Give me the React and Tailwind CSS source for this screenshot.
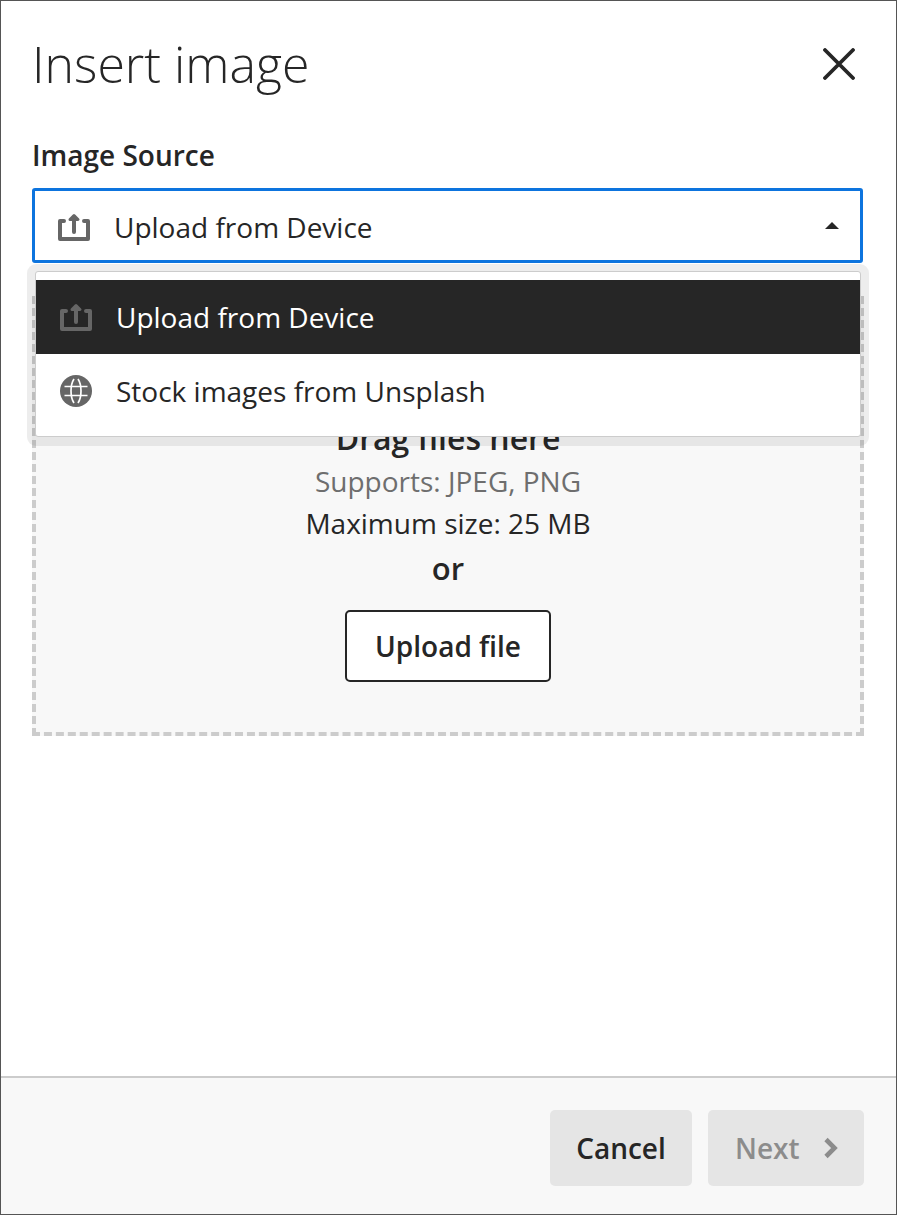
const UploadIcon = ({ className }) => (
  <svg viewBox="0 0 32 28" className={className} fill="none" stroke="currentColor" strokeWidth="4" strokeLinecap="round" strokeLinejoin="round" aria-hidden="true">
    <path d="M6 8H2v18h28V8h-4" />
    <path d="M16 19V4" />
    <path d="M12 6.500L16 2.500l4 4z" fill="currentColor" strokeWidth="3" />
  </svg>
)

const GlobeIcon = ({ className }) => (
  <svg viewBox="0 0 32 32" className={className} aria-hidden="true">
    <circle cx="16" cy="16" r="16" fill="currentColor" />
    <g fill="none" stroke="#fff" strokeWidth="1.7">
      <path d="M4.500 11.500h23M4.500 20.500h23" />
      <path d="M14 4C10 10 10 22 14 28M18 4c4 6 4 18 0 24" />
    </g>
  </svg>
)

const options = [
  { label: 'Upload from Device', Icon: UploadIcon, active: true },
  { label: 'Stock images from Unsplash', Icon: GlobeIcon, active: false },
]

export default function App() {
  return (
    <div className="flex h-[1215px] w-[897px] flex-col border border-[#555] bg-white font-['Open_Sans',sans-serif] text-[#262626]">
      <div className="relative flex-1 pr-[32px] pl-[31px]">
        <div className="flex items-start justify-between pt-[31px]">
          <h1 className="text-[50px] leading-[65px] font-light">Insert image</h1>
          <button className="mt-[16px] mr-[9px] text-[#262626]" aria-label="Close">
            <svg viewBox="0 0 32 32" className="h-8 w-8" fill="none" stroke="currentColor" strokeWidth="3.8" strokeLinecap="round">
              <path d="M2 2l28 28M30 2L2 30" />
            </svg>
          </button>
        </div>

        <label className="mt-[40px] block text-[28px] leading-[36px] font-semibold">Image Source</label>

        <div className="mt-[15px] mr-px flex h-[75px] items-center rounded-[3px] border-[3px] border-[#0d74de] pt-[2px] pr-[21px] pl-[23px]">
          <UploadIcon className="h-[28px] w-[32px] text-[#666]" />
          <span className="ml-[24px] flex-1 text-[28px] leading-none">Upload from Device</span>
          <span className="mb-[2px] h-0 w-0 border-x-[7px] border-b-[7px] border-x-transparent border-b-[#262626]" />
        </div>

        <div className="mt-[33px] flex h-[440px] flex-col items-center border-4 border-dashed border-[#ccc] bg-[#f8f8f8] pt-[118px]">
          <div className="text-[32px] leading-[40px] font-semibold">Drag files here</div>
          <div className="mt-[4px] text-[28px] leading-[38px] text-[#6e6e6e]">Supports: JPEG, PNG</div>
          <div className="mt-[4px] text-[28px] leading-[38px]">Maximum size: 25 MB</div>
          <div className="mt-[6px] text-[31px] leading-[41px] font-semibold">or</div>
          <button className="mt-[21px] flex h-[72px] w-[206px] items-center justify-center rounded-[5px] border-2 border-[#262626] bg-white pb-px text-[28px] font-semibold">
            Upload file
          </button>
        </div>

        <div className="absolute top-[270px] right-[35px] left-[34px] rounded-[3px] border border-[#ccc] bg-white py-[8px] shadow-[0_1px_0_8px_rgba(0,0,0,0.07)]">
          {options.map(({ label, Icon, active }) => (
            <div key={label} className={`flex h-[74px] items-center pl-[24px] ${active ? 'bg-[#262626] text-white' : ''}`}>
              <Icon className="h-[32px] w-[32px] text-[#666]" />
              <span className="ml-[24px] text-[28px] leading-none">{label}</span>
            </div>
          ))}
        </div>
      </div>

      <div className="flex h-[138px] justify-end gap-4 border-t-2 border-[#ccc] bg-[#f8f8f8] pt-[32px] pr-[32px]">
        <button className="h-[76px] w-[142px] rounded-[5px] bg-[#e5e5e5] text-[28px] font-semibold">Cancel</button>
        <button className="flex h-[76px] w-[156px] items-center gap-[23px] rounded-[5px] bg-[#e5e5e5] pl-[27px] text-[28px] font-semibold text-[#8c8c8c]">
          Next
          <svg viewBox="0 0 16 22" className="h-[22px] w-4" fill="none" stroke="currentColor" strokeWidth="4.600" aria-hidden="true">
            <path d="M3 2.500L11.500 11 3 19.500" />
          </svg>
        </button>
      </div>
    </div>
  )
}
